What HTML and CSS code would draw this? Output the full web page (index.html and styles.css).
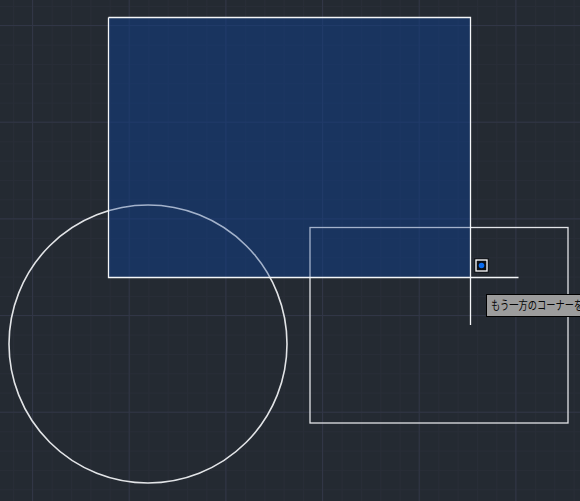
FILE: index.html
```html
<!DOCTYPE html>
<html lang="ja">
<head>
    <meta charset="UTF-8">
    <title>もう一方のコーナーを指定</title>
    <link rel="stylesheet" href="styles.css">
</head>
<body>
    <div class="viewport">
        <svg class="drawing" width="580" height="501" viewBox="0 0 580 501">
            <defs>
                <pattern id="minorGrid" patternUnits="userSpaceOnUse" x="13" y="6" width="19.33" height="19.33">
                    <path class="grid-minor" d="M0.5 0V19.33M0 0.5H19.33"/>
                </pattern>
                <pattern id="majorGrid" patternUnits="userSpaceOnUse" x="32" y="25" width="96.67" height="96.67">
                    <path class="grid-major" d="M0.5 0V96.67M0 0.5H96.67"/>
                </pattern>
            </defs>

            <rect width="580" height="501" fill="url(#minorGrid)"/>
            <rect width="580" height="501" fill="url(#majorGrid)"/>

            <!-- selection window, under the objects -->
            <rect class="window-fill" x="108.5" y="17.5" width="362" height="260"/>

            <!-- objects -->
            <circle class="shape round" cx="148" cy="344" r="139"/>
            <rect class="shape" x="310" y="227.5" width="258" height="195.5"/>

            <!-- tint over the objects inside the window -->
            <rect class="window-tint" x="108.5" y="17.5" width="362" height="260"/>
            <path class="shape bright" d="M108.5 17.5H470.5V325M470.5 277.5H518.5M470.5 277.5H108.5V17.5"/>

            <!-- snap marker -->
            <rect class="marker-shadow" x="474" y="258" width="15" height="15"/>
            <rect class="marker-box" x="476" y="260" width="11" height="11"/>
            <circle class="marker-dot" cx="481.5" cy="265.5" r="2.8"/>
        </svg>
        <div class="tooltip"><span class="tooltip-text">もう一方のコーナーを指定</span></div>
    </div>
</body>
</html>
```

FILE: styles.css
```css
html, body {
    margin: 0;
    padding: 0;
    background: #242a32;
}
.viewport {
    position: relative;
    width: 580px;
    height: 501px;
    overflow: hidden;
    background: #242a32;
}
.drawing {
    display: block;
}
.grid-minor {
    fill: none;
    stroke: #282d37;
    stroke-width: 1;
}
.grid-major {
    fill: none;
    stroke: #313646;
    stroke-width: 1;
}
.shape {
    fill: none;
    stroke: #e2e4e7;
    stroke-width: 1.3;
}
.round {
    stroke-width: 1.6;
}
.bright {
    stroke: #f4f6f8;
}
.window-fill {
    fill: rgba(18, 62, 138, 0.3);
    stroke: none;
}
.window-tint {
    fill: rgba(18, 62, 138, 0.3);
    stroke: none;
}
.marker-shadow {
    fill: rgba(0, 0, 0, 0.4);
}
.marker-box {
    fill: #0c0f15;
    stroke: #ffffff;
    stroke-width: 1.3;
}
.marker-dot {
    fill: #0a6cf0;
}
.tooltip {
    position: absolute;
    left: 486px;
    top: 294px;
    width: 130px;
    height: 21px;
    padding-left: 4px;
    border: 1px solid #000;
    background: #9c9c9c;
    color: #050505;
    font: 12px/20px "Noto Sans CJK JP", sans-serif;
    white-space: nowrap;
}
.tooltip-text {
    display: inline-block;
    transform: scaleX(0.77);
    transform-origin: left center;
}
```
